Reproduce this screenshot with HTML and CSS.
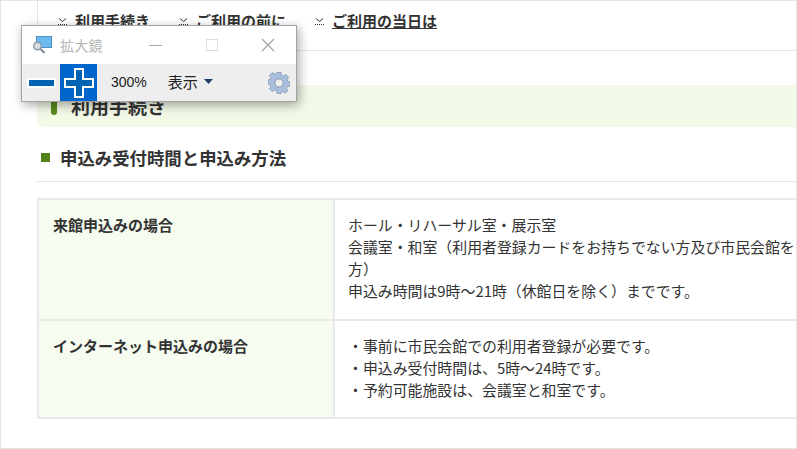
FILE: index.html
```html
<!DOCTYPE html>
<html lang="ja">
<head>
<meta charset="utf-8">
<title>拡大鏡</title>
<link rel="stylesheet" href="styles.css">
</head>
<body>
<div class="frame">
  <main class="page">
    <nav class="nav">
      <a class="nav-item"><svg class="chev" viewBox="0 0 9 7"><path d="M1 .5l3.500 3 3.500-3" fill="none" stroke="#333" stroke-width="1"/><path d="M0 6.500h9" stroke="#333" stroke-width="1" stroke-dasharray="1 1"/></svg><span class="nav-text">利用手続き</span></a>
      <a class="nav-item"><svg class="chev" viewBox="0 0 9 7"><path d="M1 .5l3.500 3 3.500-3" fill="none" stroke="#333" stroke-width="1"/><path d="M0 6.500h9" stroke="#333" stroke-width="1" stroke-dasharray="1 1"/></svg><span class="nav-text">ご利用の前に</span></a>
      <a class="nav-item"><svg class="chev" viewBox="0 0 9 7"><path d="M1 .5l3.500 3 3.500-3" fill="none" stroke="#333" stroke-width="1"/><path d="M0 6.500h9" stroke="#333" stroke-width="1" stroke-dasharray="1 1"/></svg><span class="nav-text current">ご利用の当日は</span></a>
    </nav>
    <h2 class="band"><span class="band-bar"></span>利用手続き</h2>
    <h3 class="section"><span class="section-mark"></span>申込み受付時間と申込み方法</h3>
    <div class="table">
      <div class="th row-one">来館申込みの場合</div>
      <div class="td row-one">
        <div class="line">ホール・リハーサル室・展示室</div>
        <div class="line">会議室・和室（利用者登録カードをお持ちでない方及び市民会館を</div>
        <div class="line">方）</div>
        <div class="line">申込み時間は9時～21時（休館日を除く）までです。</div>
      </div>
      <div class="th row-two">インターネット申込みの場合</div>
      <div class="td row-two">
        <div class="line">・事前に市民会館での利用者登録が必要です。</div>
        <div class="line">・申込み受付時間は、5時～24時です。</div>
        <div class="line">・予約可能施設は、会議室と和室です。</div>
      </div>
    </div>
  </main>
  <aside class="magnifier">
    <header class="titlebar">
      <svg class="app-icon" viewBox="0 0 20 18">
        <rect x="4.500" y="0.500" width="15" height="11" fill="#6cbcf2" stroke="#4d8fc4"/>
        <circle cx="5.500" cy="10" r="3.800" fill="#d5dde3" stroke="#8a99a5" stroke-width="1.400"/>
        <path d="M8.500 13l4 4" stroke="#7b8a96" stroke-width="2"/>
      </svg>
      <span class="app-title">拡大鏡</span>
      <div class="win-controls">
        <svg class="win-btn" viewBox="0 0 14 14"><path d="M0 7.500h13" stroke="#a8a8a8"/></svg>
        <svg class="win-btn" viewBox="0 0 14 14"><rect x="1.500" y="1.500" width="11" height="11" fill="none" stroke="#dcdcdc"/></svg>
        <svg class="win-btn" viewBox="0 0 14 14"><path d="M1 1l12 12M13 1L1 13" stroke="#a0a0a0" stroke-width="1.100"/></svg>
      </div>
    </header>
    <div class="toolbar">
      <button class="tool-btn minus"><svg viewBox="0 0 30 10" width="30" height="10"><rect x="1" y="1" width="27" height="8" fill="#0063b1" stroke="#fff" stroke-width="2"/></svg></button>
      <button class="tool-btn plus"><svg viewBox="0 0 32 32" width="32" height="32"><path d="M12 2h8v10h10v8H20v10h-8V20H2v-8h10z" fill="#0063b1" stroke="#fff" stroke-width="2"/></svg></button>
      <span class="zoom-level">300%</span>
      <span class="view-menu">表示<svg class="caret" viewBox="0 0 9 5"><path d="M0 0h9L4.500 5z" fill="#1d3f66"/></svg></span>
      <svg class="gear" viewBox="0 0 22 22">
        <path d="M9 1h4l.6 2.700 1.800.8L17.800 3l2.800 2.800-1.500 2.400.8 1.800 2.100.5v4l-2.700.6-.8 1.800 1.500 2.400-2.800 2.200-2.400-1.500-1.800.8L13 22H9l-.6-2.700-1.800-.8L4.200 20l-2.800-2.800 1.500-2.400-.8-1.800L0 12.500v-4l2.100-.5.800-1.800L1.400 3.800 4.200 1l2.400 1.500 1.800-.8z" transform="translate(0 -.5)" fill="#a9bfdb" stroke="#8497ae" stroke-width=".8"/>
        <circle cx="11" cy="11" r="4.200" fill="#eeeeee" stroke="#7f93ab" stroke-width="1"/>
      </svg>
    </div>
  </aside>
</div>
</body>
</html>
```
FILE: styles.css
```css
* { box-sizing: border-box; }
html, body { margin: 0; padding: 0; }
body {
  width: 797px;
  height: 449px;
  overflow: hidden;
  background: #fff;
  font-family: "Noto Sans CJK JP", "Noto Sans", sans-serif;
  color: #333;
}
.frame {
  position: relative;
  width: 797px;
  height: 449px;
  border: 1px solid #e4e4e4;
  overflow: hidden;
}
.page {
  width: 795px;
  padding-left: 36px;
}
.nav {
  display: flex;
  height: 50px;
  gap: 29px;
  padding: 9px 0 0 21px;
  border-bottom: 1px solid #e4e4e4;
  position: relative;
}
.nav::before {
  content: "";
  position: absolute;
  left: 0;
  top: 0;
  height: 49px;
  border-left: 1px solid #e4e4e4;
}
.nav-item { display: flex; align-items: center; height: 22px; gap: 8px; }
.chev { width: 9px; height: 7px; flex: none; margin-top: 1px; }
.nav-text { font-size: 15px; font-weight: 700; line-height: 22px; white-space: nowrap; }
.current { text-decoration: underline; }
.band {
  display: flex;
  align-items: center;
  margin: 34px 0 0;
  height: 42px;
  padding-left: 14px;
  background: #f2f9e7;
  border-radius: 0 0 0 6px;
  font-size: 19px;
  font-weight: 700;
  line-height: 42px;
  gap: 14px;
  color: #333;
}
.band-bar { width: 6px; height: 18px; border-radius: 3px; background: #5b8a1e; }
.section {
  display: flex;
  align-items: center;
  gap: 10px;
  height: 55px;
  margin: 0;
  padding: 7px 0 0 4px;
  font-size: 17.400px;
  font-weight: 700;
  border-bottom: 1px solid #e4e4e4;
}
.section-mark { width: 9px; height: 9px; background: #54801a; }
.table {
  display: grid;
  grid-template-columns: 296px 1fr;
  margin-top: 16px;
  width: 759px;
  border: 2px solid #e9e9e9;
  border-right: 0;
  font-size: 15px;
  line-height: 22px;
}
.th {
  background: #f6fcf0;
  font-weight: 700;
  padding: 14px;
  border-right: 2px solid #e9e9e9;
}
.td { padding: 14px 13px; white-space: nowrap; overflow: hidden; font-size: 14.900px; }
.row-two { border-top: 2px solid #e9e9e9; height: 98px; }
.row-one { height: 119px; }
.magnifier {
  position: absolute;
  left: 20px;
  top: 24px;
  width: 276px;
  height: 77px;
  background: #fff;
  border: 1px solid #a3a3a3;
  box-shadow: 2px 3px 10px rgba(0, 0, 0, .35);
}
.titlebar {
  display: flex;
  align-items: center;
  height: 38px;
  padding-left: 10px;
}
.app-icon { width: 20px; height: 18px; }
.app-title { font-size: 14px; color: #b5b5b5; margin-left: 8px; letter-spacing: .3px; }
.win-controls { display: flex; gap: 42px; margin-left: auto; padding-right: 21px; }
.win-btn { width: 14px; height: 14px; }
.toolbar {
  display: flex;
  align-items: center;
  height: 37px;
  background: #eeeeee;
  font-size: 14px;
  color: #222;
}
.tool-btn {
  display: flex;
  align-items: center;
  justify-content: center;
  border: 0;
  padding: 0;
  background: transparent;
  height: 37px;
}
.minus { width: 38px; padding-left: 1px; }
.plus { width: 37px; background: #0066cc; }
.zoom-level { margin: 0 0 1px 14px; font-family: "Liberation Sans", sans-serif; font-size: 14px; }
.view-menu { display: flex; align-items: center; margin: 0 0 3px 21px; gap: 6px; font-size: 15px; }
.caret { width: 9px; height: 5px; margin-top: 1px; }
.gear { width: 22px; height: 22px; margin-left: auto; margin-right: 6px; }
```
